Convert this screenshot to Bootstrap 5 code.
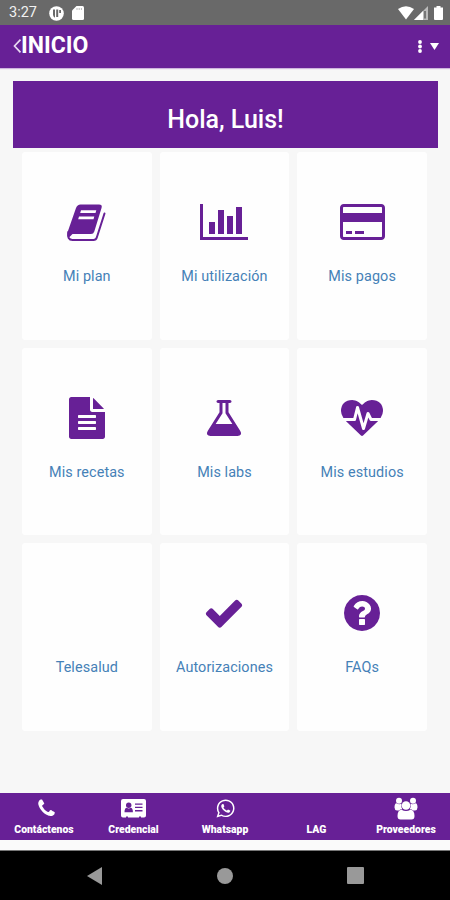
<!DOCTYPE html>
<html lang="es">
<head>
<meta charset="utf-8">
<meta name="viewport" content="width=device-width, initial-scale=1">
<title>Inicio</title>
<link rel="stylesheet" href="https://cdn.jsdelivr.net/npm/bootstrap@5.3.0/dist/css/bootstrap.min.css">
<style>
:root{--brand:#672096}
body{font-family:Roboto,"Liberation Sans",sans-serif;background:#f7f7f7;overflow:hidden}
svg{display:block;fill:currentColor;overflow:visible}
.screen{width:450px;height:900px}
.status{height:25px;background:#696969;padding:1px 7px 0 9px;font-size:14.5px;line-height:24px;color:#f2f2f2}
.status .app-mark{margin-left:12px}
.status .battery{margin-left:6px}
.bg-brand{background:var(--brand);color:#fff}
.appbar{height:43px;padding:0 11px 1px 13px;box-shadow:0 1px 1px #cdb4dd}
.appbar h1{font-size:23px;line-height:28px;font-weight:700;letter-spacing:0}
.appbar .caret{margin-left:7px}
.hero{height:67px;margin:13px 12px 4px 13px;padding-top:10px}
.hero h2{font-size:25px;line-height:30px;font-weight:500}
.tiles{width:413px;margin:0 auto 0 18px;row-gap:8px}
.tiles>div{padding:0 4px}
.tile{height:187.7px;background:#fefefe;border-radius:3px;padding-top:49px;color:var(--brand)}
.tile .ico{height:42px}
.tile span{margin-top:24px;font-size:14.4px;line-height:20px;letter-spacing:.1px;color:#4581b7}
.tabs{height:47px;padding-top:5px;box-shadow:0 1px 1px #b99bcd}
.tabs a{width:91px;font-size:10.4px;font-weight:900;line-height:13px}
.tabs a:first-child,.tabs a:last-child{width:88px}
.tabs a:nth-child(3){width:92px}
.tabs .ico{height:21px;margin-bottom:4px}
.gap-strip{height:11px;background:#fafafa;border-bottom:1px solid #777}
.sysnav{height:49px;background:#000;color:#999;padding:0 86px 0 87px}
</style>
<script src="https://cdn.jsdelivr.net/npm/bootstrap@5.3.0/dist/js/bootstrap.bundle.min.js"></script>
</head>
<body>
<div class="screen d-flex flex-column">
  <div class="status d-flex align-items-center">
    <span>3:27</span>
    <svg class="app-mark" width="15" height="15" viewBox="0 0 15 15"><circle cx="7.5" cy="7.5" r="7.3" fill="#fff"/><path fill="#696969" d="M4 3.500h2v8.300q-2-1-2-3zM7.200 3.500h2v7.500h-2zM10.200 4h1.800v3h-1.800z"/></svg>
    <svg width="12" height="14" viewBox="0 0 12 14" class="ms-2"><path fill="#fff" d="M4.500 0H10.500Q12 0 12 1.500V12.500Q12 14 10.500 14H1.500Q0 14 0 12.500V4.500z"/><path stroke="#bbb" d="M5 2v2M7.200 2v2M9.400 2v2"/></svg>
    <svg class="ms-auto" width="16" height="14" viewBox="0 0 16 14"><path fill="#fff" d="M0 3Q8-2.500 16 3L8 13.500z"/></svg>
    <svg width="14" height="14" viewBox="0 0 14 14" class="ms-0"><path fill="#bbb" d="M14 0v14H0z"/><path fill="#fff" d="M9 5V14H0z"/><path fill="#777" d="M10 5h2v7.500h-2z"/></svg>
    <svg class="battery" width="9" height="14" viewBox="0 0 9 14"><path fill="#fff" d="M2.500 0h4v1.500H9V13q0 1-1 1H1q-1 0-1-1V1.500h2.500z"/></svg>
  </div>
  <header class="appbar bg-brand d-flex align-items-center">
    <svg width="8" height="14" viewBox="0 0 8 14"><path d="M7.500 .7L1.500 7l6 6.300" fill="none" stroke="#e8daf2" stroke-width="1.700"/></svg>
    <h1 class="mb-0">INICIO</h1>
    <svg class="ms-auto" width="5" height="13" viewBox="0 0 5 13"><circle cx="2" cy="2" r="1.900"/><circle cx="2" cy="6.500" r="1.900"/><circle cx="2" cy="11" r="1.900"/></svg>
    <svg class="caret" width="9" height="7" viewBox="0 0 9 7"><path d="M0 0h9L4.500 7z"/></svg>
  </header>
  <section class="hero bg-brand d-flex align-items-center justify-content-center"><h2 class="mb-0">Hola, Luis!</h2></section>
  <main class="row tiles">
    <div class="col-4"><a class="tile d-flex flex-column align-items-center text-decoration-none" href="#"><svg class="ico" viewBox="0 -3 39 42"><path fill-rule="evenodd" d="M13.500 .5H32q3.500 0 2.600 3.200L27.300 27.500Q26.500 30 24 30H5.500L2.500 33Q-.5 31 .8 27.500L9 4Q10.300 .5 13.500 .5zM14 6.300L13.200 9H28.500L29.300 6.300zM12 12.600L11.200 15.300H26.500L27.300 12.600z"/><path fill="none" stroke="currentColor" stroke-width="2" stroke-linejoin="round" stroke-linecap="round" d="M1.300 28Q0 36 5.500 36H26.500Q29 36 29.800 33.500L37.500 9.500"/></svg><span>Mi plan</span></a></div>
    <div class="col-4"><a class="tile d-flex flex-column align-items-center text-decoration-none" href="#"><svg class="ico" viewBox="0 0 2048 1792"><path d="M640 896v512h-256v-512h256zm384-512v1024h-256v-1024h256zm1024 1152v128h-2048v-1536h128v1408h1920zm-640-896v768h-256v-768h256zm384-384v1152h-256v-1152h256z"/></svg><span>Mi utilización</span></a></div>
    <div class="col-4"><a class="tile d-flex flex-column align-items-center text-decoration-none" href="#"><svg class="ico" viewBox="0 0 1920 1792"><path d="M1760 128q66 0 113 47t47 113v1216q0 66-47 113t-113 47h-1600q-66 0-113-47t-47-113v-1216q0-66 47-113t113-47h1600zm-1600 128q-13 0-22.500 9.500t-9.500 22.500v224h1664v-224q0-13-9.500-22.500t-22.500-9.500h-1600zm1600 1280q13 0 22.500-9.500t9.500-22.500v-608h-1664v608q0 13 9.500 22.500t22.500 9.500h1600zm-1504-128v-128h256v128h-256zm384 0v-128h384v128h-384z"/></svg><span>Mis pagos</span></a></div>
    <div class="col-4"><a class="tile d-flex flex-column align-items-center text-decoration-none" href="#"><svg class="ico" viewBox="0 0 1792 1792"><path d="M1596 476q14 14 28 36h-472v-472q22 14 36 28zm-476 164h544v1056q0 40-28 68t-68 28h-1344q-40 0-68-28t-28-68v-1600q0-40 28-68t68-28h800v544q0 40 28 68t68 28zm160 736v-64q0-14-9-23t-23-9h-704q-14 0-23 9t-9 23v64q0 14 9 23t23 9h704q14 0 23-9t9-23zm0-256v-64q0-14-9-23t-23-9h-704q-14 0-23 9t-9 23v64q0 14 9 23t23 9h704q14 0 23-9t9-23zm0-256v-64q0-14-9-23t-23-9h-704q-14 0-23 9t-9 23v64q0 14 9 23t23 9h704q14 0 23-9t9-23z"/></svg><span>Mis recetas</span></a></div>
    <div class="col-4"><a class="tile d-flex flex-column align-items-center text-decoration-none" href="#"><svg class="ico" viewBox="0 0 1792 1792"><path d="M1591 1448q56 89 21.500 152.500t-140.500 63.500h-1152q-106 0-140.500-63.500t21.500-152.500l503-793v-399h-64q-26 0-45-19t-19-45 19-45 45-19h512q26 0 45 19t19 45-19 45-45 19h-64v399zm-779-725l-272 429h712l-272-429-20-31v-436h-128v436z"/></svg><span>Mis labs</span></a></div>
    <div class="col-4"><a class="tile d-flex flex-column align-items-center text-decoration-none" href="#"><svg class="ico" viewBox="0 -128 1792 1792"><path d="M1280 896h305q-5 6-10 10.500t-9 7.500l-3 4-623 600q-18 18-44 18t-44-18l-624-602q-5-2-21-20h369q22 0 39.500-13.500t22.500-34.500l70-281 190 667q6 20 23 33t39 13q21 0 38-13t23-33l146-485 56 112q18 35 57 35zm512-428q0 145-103 300h-369l-111-221q-8-17-25.500-27t-36.500-8q-45 5-56 46l-129 430-196-686q-6-20-23.500-33t-39.500-13-39 13.500-22 34.500l-116 464h-423q-103-155-103-300 0-220 127-344t351-124q62 0 126.500 21.500t120 58 95.500 68.500 76 68q36-36 76-68t95.500-68.500 120-58 126.500-21.500q224 0 351 124t127 344z"/></svg><span>Mis estudios</span></a></div>
    <div class="col-4"><a class="tile d-flex flex-column align-items-center text-decoration-none" href="#"><div class="ico"></div><span>Telesalud</span></a></div>
    <div class="col-4"><a class="tile d-flex flex-column align-items-center text-decoration-none" href="#"><svg class="ico" viewBox="0 0 1792 1792"><path d="M1671 566q0 40-28 68l-724 724-136 136q-28 28-68 28t-68-28l-136-136-362-362q-28-28-28-68t28-68l136-136q28-28 68-28t68 28l294 295 656-657q28-28 68-28t68 28l136 136q28 28 28 68z"/></svg><span>Autorizaciones</span></a></div>
    <div class="col-4"><a class="tile d-flex flex-column align-items-center text-decoration-none" href="#"><svg class="ico" viewBox="0 0 1792 1792"><path d="M1024 1376v-192q0-14-9-23t-23-9h-192q-14 0-23 9t-9 23v192q0 14 9 23t23 9h192q14 0 23-9t9-23zm256-672q0-88-55.500-163t-138.500-116-170-41q-243 0-371 213-15 24 8 42l132 100q7 6 19 6 16 0 25-12 53-68 86-92 34-24 86-24 48 0 85.500 26t37.500 59q0 38-20 61t-68 45q-63 28-115.500 86.500t-52.500 125.500v36q0 14 9 23t23 9h192q14 0 23-9t9-23q0-19 21.500-49.500t54.500-49.500q32-18 49-28.500t46-35 44.500-48 28-60.500 12.500-81zm384 192q0 209-103 385.500t-279.500 279.500-385.500 103-385.500-103-279.500-279.500-103-385.500 103-385.500 279.500-279.500 385.500-103 385.500 103 279.500 279.500 103 385.500z"/></svg><span>FAQs</span></a></div>
  </main>
  <div class="mt-auto">
    <nav class="tabs bg-brand d-flex text-center">
      <a class="text-white text-decoration-none d-flex flex-column align-items-center" href="#"><svg class="ico ms-1" viewBox="0 0 1792 1792"><path d="M1600 1240q0 27-10 70.500t-21 68.500q-21 50-122 106-94 51-186 51-27 0-52.500-3.500t-57.500-12.500-47.500-14.500-55.500-20.500-49-18q-98-35-175-83-128-79-264.500-215.500t-215.500-264.500q-48-77-83-175-3-9-18-49t-20.500-55.500-14.500-47.500-12.500-57.500-3.500-52.500q0-92 51-186 56-101 106-122 25-11 68.500-21t70.500-10q14 0 21 3 18 6 53 76 11 19 30 54t35 63.500 31 53.500q3 4 17.500 25t21.500 35.500 7 28.500q0 20-28.500 50t-62 55-62 53-28.500 46q0 9 5 22.500t8.500 20.500 14 24 11.500 19q76 137 174 235t235 174q2 1 19 11.500t24 14 20.500 8.500 22.500 5q18 0 46-28.500t53-62 55-62 50-28.500q14 0 28.500 7t35.500 21.500 25 17.500q25 15 53.500 31t63.500 35 54 30q70 35 76 53 3 7 3 21z"/></svg>Contáctenos</a>
      <a class="text-white text-decoration-none d-flex flex-column align-items-center" href="#"><svg class="ico" width="25" viewBox="0 0 25 21"><path d="M2 1h21q2 0 2 2v14.500q0 2-2 2h-3v-1h-2v1H7v-1H5v1H2q-2 0-2-2V3q0-2 2-2z"/><g fill="#672096"><circle cx="7.700" cy="7.200" r="2.700"/><path d="M3.500 14.300q0-4.300 2.300-4.500q1.900 1.300 3.800 0q2.300.2 2.300 4.500zM14 5.500h7.500v1.300H14zM14 8.800h7.500v1.300H14zM14 12.100h7.500v1.300H14z"/></g></svg>Credencial</a>
      <a class="text-white text-decoration-none d-flex flex-column align-items-center" href="#"><svg class="ico" viewBox="0 0 1792 1792"><path d="M1113 974q13 0 97.500 44t89.500 53q2 5 2 15 0 33-17 76-16 39-71 65.500t-102 26.500q-57 0-190-62-98-45-170-118t-148-185q-72-107-71-194v-8q3-91 74-158 24-22 52-22 6 0 18 1.500t19 1.500q19 0 26.500 6.500t15.500 27.500q8 20 33 88t25 75q0 21-34.500 57.500t-34.500 46.500q0 7 5 15 34 73 102 137 56 53 151 101 12 7 22 7 15 0 54-48.500t52-48.500zm-203 530q127 0 243.500-50t200.500-134 134-200.500 50-243.500-50-243.500-134-200.500-200.500-134-243.500-50-243.500 50-200.500 134-134 200.500-50 243.500q0 203 120 368l-79 233 242-77q158 104 345 104zm0-1382q153 0 292.500 60t240.500 161 161 240.500 60 292.500-60 292.500-161 240.500-240.500 161-292.500 60q-195 0-365-94l-417 134 136-405q-108-178-108-389 0-153 60-292.500t161-240.500 240.500-161 292.500-60z"/></svg>Whatsapp</a>
      <a class="text-white text-decoration-none d-flex flex-column align-items-center" href="#"><div class="ico"></div>LAG</a>
      <a class="text-white text-decoration-none d-flex flex-column align-items-center" href="#"><svg class="ico" width="24" viewBox="0 0 24 21"><circle cx="5" cy="2.800" r="3"/><circle cx="19" cy="2.800" r="3"/><path d="M.5 9.500q0-4 2-4.200q2.500 1.500 5 .4Q6.800 9 8.300 11.200Q6 11.300 5 12.500H3Q.5 12 .5 9.500zM23.500 9.500q0-4-2-4.200q-2.500 1.500-5 .4Q17.200 9 15.700 11.200Q18 11.300 19 12.500h2Q23.500 12 23.500 9.500z"/><circle cx="12" cy="7.500" r="4.300"/><path d="M3.500 18q0-6 4-6.300q4.500 2.800 9 0q4 .3 4 6.300q0 3.500-3 3.500h-11q-3 0-3-3.500z"/></svg>Proveedores</a>
    </nav>
    <div class="gap-strip"></div>
    <div class="sysnav d-flex align-items-center justify-content-between">
      <svg width="15" height="18" viewBox="0 0 15 18"><path d="M15 0v18L0 9z"/></svg>
      <svg width="16" height="16" viewBox="0 0 16 16"><circle cx="8" cy="8" r="8"/></svg>
      <svg width="17" height="17" viewBox="0 0 17 17"><rect width="17" height="17" rx="1"/></svg>
    </div>
  </div>
</div>
</body>
</html>
